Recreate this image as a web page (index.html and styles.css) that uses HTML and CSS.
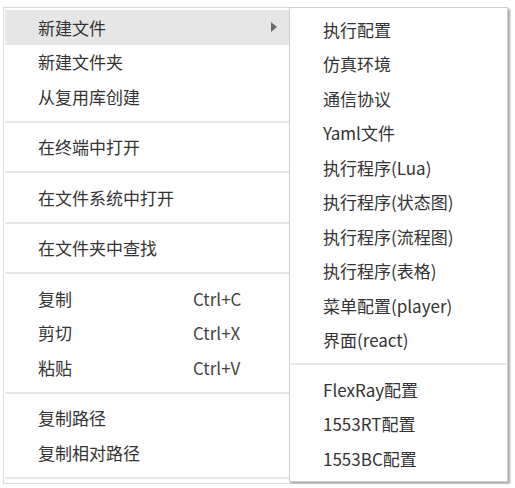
FILE: index.html
```html
<!DOCTYPE html>
<html lang="zh-CN">
<head>
<meta charset="utf-8">
<title>Context menu</title>
<link rel="stylesheet" href="styles.css">
</head>
<body>
<div class="stage">
  <div class="menu main">
    <div class="item active"><span class="label">新建文件</span><span class="arrow"></span></div>
    <div class="item"><span class="label">新建文件夹</span></div>
    <div class="item"><span class="label">从复用库创建</span></div>
    <div class="sep"></div>
    <div class="item"><span class="label">在终端中打开</span></div>
    <div class="sep"></div>
    <div class="item"><span class="label">在文件系统中打开</span></div>
    <div class="sep"></div>
    <div class="item"><span class="label">在文件夹中查找</span></div>
    <div class="sep"></div>
    <div class="item"><span class="label">复制</span><span class="key">Ctrl+C</span></div>
    <div class="item"><span class="label">剪切</span><span class="key">Ctrl+X</span></div>
    <div class="item"><span class="label">粘贴</span><span class="key">Ctrl+V</span></div>
    <div class="sep"></div>
    <div class="item"><span class="label">复制路径</span></div>
    <div class="item"><span class="label">复制相对路径</span></div>
    <div class="sep last"></div>
  </div>
  <div class="menu sub">
    <div class="item">执行配置</div>
    <div class="item">仿真环境</div>
    <div class="item">通信协议</div>
    <div class="item">Yaml文件</div>
    <div class="item">执行程序(Lua)</div>
    <div class="item">执行程序(状态图)</div>
    <div class="item">执行程序(流程图)</div>
    <div class="item">执行程序(表格)</div>
    <div class="item">菜单配置(player)</div>
    <div class="item">界面(react)</div>
    <div class="sep"></div>
    <div class="item">FlexRay配置</div>
    <div class="item">1553RT配置</div>
    <div class="item">1553BC配置</div>
  </div>
</div>
</body>
</html>
```

FILE: styles.css
```css
html, body {
  margin: 0;
  padding: 0;
  background: #ffffff;
}
body {
  font-family: "Noto Sans CJK SC", "Microsoft YaHei", sans-serif;
  font-size: 17px;
  color: #333333;
}
.stage {
  position: relative;
  padding: 7px 0 0 3px;
}
.menu {
  box-sizing: border-box;
  background: #ffffff;
  border: 1px solid #dadada;
}
.main {
  width: 288px;
  padding: 2px 1px 4px;
}
.item {
  display: flex;
  align-items: center;
  height: 34.5px;
  line-height: 1;
  white-space: nowrap;
}
.main .item {
  padding-left: 33px;
}
.main .item.active {
  background: #e6e6e6;
}
.label {
  width: 155px;
}
.key {
  color: #444;
}
.arrow {
  margin-left: auto;
  margin-right: 12px;
  width: 0;
  height: 0;
  border-left: 6px solid #6a6a6a;
  border-top: 5px solid transparent;
  border-bottom: 5px solid transparent;
}
.sep {
  height: 2px;
  background: #e6e6e6;
  margin: 7px 0;
}
.main .sep.last {
  margin-bottom: 0;
}
.sub {
  position: absolute;
  left: 289px;
  top: 7px;
  width: 219px;
  padding: 4px 0 5px;
  box-shadow: 2px 2px 2px rgba(0, 0, 0, 0.35);
  border-color: #cfcfcf;
}
.sub .item {
  padding-left: 33px;
}
.sub .sep {
  margin: 6px 1px 7px;
}
```
